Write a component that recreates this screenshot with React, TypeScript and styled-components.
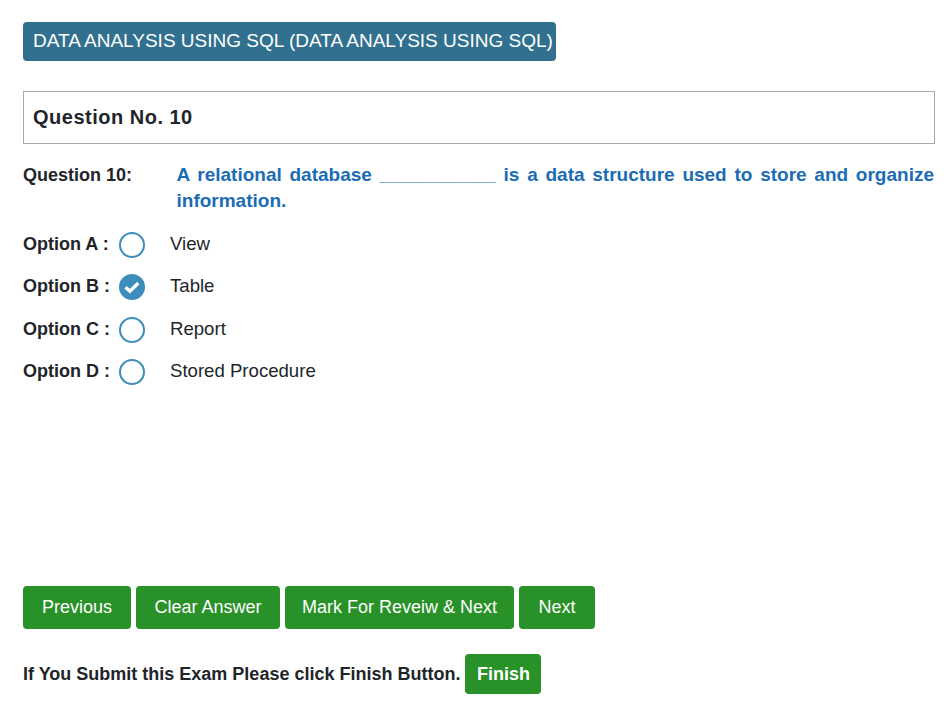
import React, { useState } from "react";
import styled, { createGlobalStyle } from "styled-components";

const GlobalStyle = createGlobalStyle`
  * { box-sizing: border-box; }
  body { margin: 0; background: #fff; color: #212529; font-family: "Liberation Sans", Arial, sans-serif; }
`;

const Page = styled.main`
  display: flex;
  flex-direction: column;
  align-items: flex-start;
  min-height: 719px;
  padding: 22px 17px 25px 23px;
`;

const CourseBadge = styled.h1`
  margin: 0;
  width: 533px;
  height: 39px;
  padding: 0 10px;
  border-radius: 4px;
  background: #31708f;
  color: #fff;
  font-size: 19px;
  font-weight: 400;
  line-height: 37px;
  white-space: nowrap;
`;

const QuestionHeader = styled.h2`
  align-self: stretch;
  height: 53px;
  margin: 30px 0 0;
  padding: 0 9px;
  border: 1px solid #aaa;
  font-size: 20px;
  letter-spacing: 0.5px;
  line-height: 50px;
`;

const QuestionRow = styled.section`
  display: grid;
  grid-template-columns: 153.5px 1fr;
  align-self: stretch;
  margin-top: 18px;
  padding-right: 1px;
`;

const Label = styled.span`
  font-size: 18px;
  font-weight: 700;
  line-height: 26px;
  white-space: nowrap;
`;

const QuestionText = styled.p`
  margin: 0;
  color: #1b6cb5;
  font-size: 19px;
  font-weight: 700;
  line-height: 26px;
  text-align: justify;
`;

const Options = styled.div`
  display: flex;
  flex-direction: column;
  margin-top: 17px;
`;

const OptionRow = styled.label`
  display: grid;
  grid-template-columns: 96px 51px auto;
  height: 42.4px;
  cursor: pointer;
`;

const HiddenRadio = styled.input`
  appearance: none;
  width: 0;
  height: 0;
  margin: 0;
`;

const Circle = styled.span<{ $checked: boolean }>`
  display: flex;
  align-items: center;
  justify-content: center;
  width: 26px;
  height: 26px;
  margin-top: 1px;
  border: 2px solid #3c8dbc;
  border-radius: 50%;
  background: ${(p) => (p.$checked ? "#3c8dbc" : "#fff")};
`;

const OptionText = styled.span`
  font-size: 18.6px;
  line-height: 26px;
  white-space: nowrap;
`;

const Actions = styled.div`
  display: flex;
  gap: 5px;
  margin-top: auto;
`;

const Button = styled.button<{ $width: number }>`
  width: ${(p) => p.$width}px;
  height: 43px;
  padding: 0;
  border: 0;
  border-radius: 4px;
  background: #289128;
  color: #fff;
  font: 400 18px/41px "Liberation Sans", Arial, sans-serif;
  white-space: nowrap;
`;

const FinishRow = styled.div`
  display: flex;
  align-items: center;
  gap: 5px;
  margin-top: 25px;
`;

const FinishButton = styled(Button)`
  height: 40px;
  font-weight: 700;
  line-height: 38px;
`;

const options = ["View", "Table", "Report", "Stored Procedure"];

export default function App() {
  const [selected, setSelected] = useState(1);
  return (
    <Page>
      <GlobalStyle />
      <CourseBadge>DATA ANALYSIS USING SQL (DATA ANALYSIS USING SQL)</CourseBadge>
      <QuestionHeader>Question No. 10</QuestionHeader>
      <QuestionRow>
        <Label>Question 10:</Label>
        <QuestionText>
          A relational database ___________ is a data structure used to store and organize information.
        </QuestionText>
      </QuestionRow>
      <Options>
        {options.map((text, i) => (
          <OptionRow key={text}>
            <Label>
              Option {"ABCD"[i]} :
              <HiddenRadio type="radio" name="answer" checked={selected === i} onChange={() => setSelected(i)} />
            </Label>
            <Circle $checked={selected === i}>
              {selected === i && (
                <svg width="18" height="18" viewBox="0 0 18 18" fill="none">
                  <path d="M2.5 9.2 7 13.2 15.3 5" stroke="#fff" strokeWidth="3.4" />
                </svg>
              )}
            </Circle>
            <OptionText>{text}</OptionText>
          </OptionRow>
        ))}
      </Options>
      <Actions>
        <Button $width={108}>Previous</Button>
        <Button $width={144}>Clear Answer</Button>
        <Button $width={229}>Mark For Reveiw &amp; Next</Button>
        <Button $width={76}>Next</Button>
      </Actions>
      <FinishRow>
        <Label>If You Submit this Exam Please click Finish Button.</Label>
        <FinishButton $width={76}>Finish</FinishButton>
      </FinishRow>
    </Page>
  );
}
